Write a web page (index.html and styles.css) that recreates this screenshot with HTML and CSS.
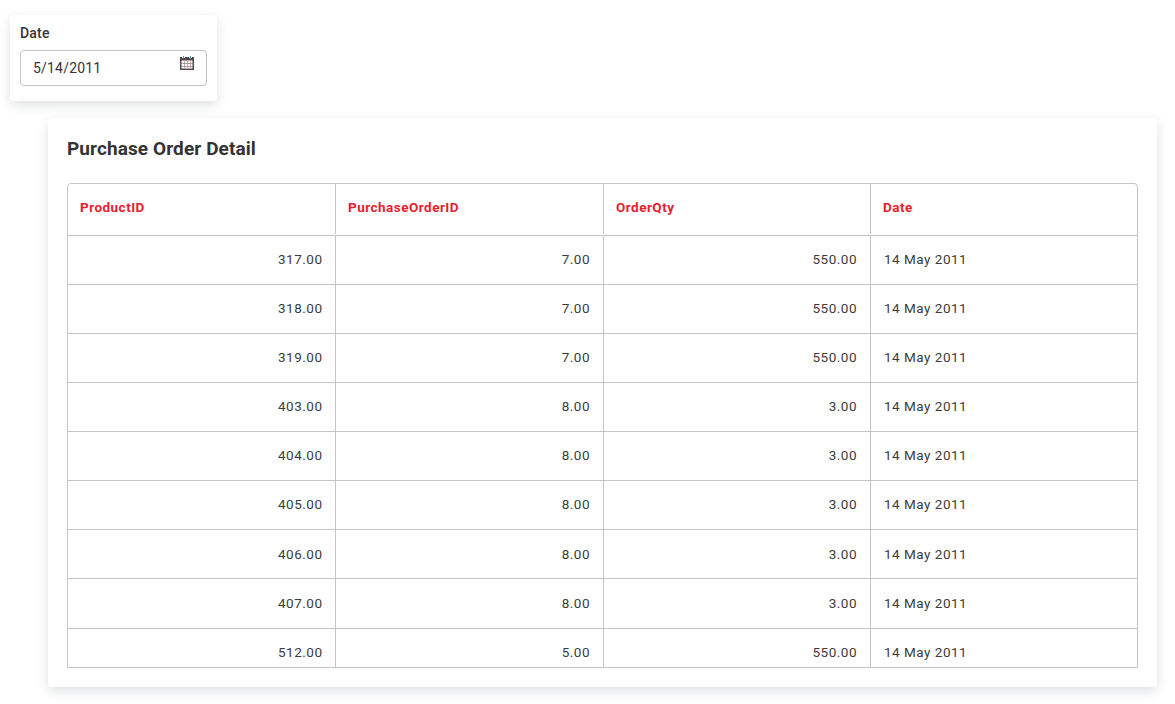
FILE: index.html
```html
<!DOCTYPE html>
<html lang="en">
<head>
<meta charset="utf-8">
<title>Purchase Order Detail</title>
<link rel="stylesheet" href="styles.css">
</head>
<body>
<section class="card filter">
  <label class="filter-label" for="date">Date</label>
  <div class="date-field" id="date">
    <span class="date-value">5/14/2011</span>
    <svg class="calendar" width="14" height="14" viewBox="0 0 14 14">
      <path fill="#55484a" d="M0 1h14v13H0z"/>
      <path fill="#fff" d="M1.500 4.500h11v8h-11z"/>
      <path fill="#d3aaa0" d="M4 4.500h1v8H4zM7 4.500h1v8H7zM10 4.500h1v8h-1z"/>
      <path fill="#7f7f86" fill-opacity=".7" d="M1 7h12v1H1zM1 10h12v1H1z"/>
      <path fill="#fff" d="M2 1h3v1H2zM9 1h3v1H9z"/>
      <path fill="#4b93b5" d="M3 0h1v3H3zM10 0h1v3h-1z"/>
    </svg>
  </div>
</section>
<section class="card report">
  <h1 class="title">Purchase Order Detail</h1>
  <div class="table-frame">
    <table class="orders">
      <thead><tr><th>ProductID</th><th>PurchaseOrderID</th><th>OrderQty</th><th>Date</th></tr></thead>
      <tbody>
        <tr><td>317.00</td><td>7.00</td><td>550.00</td><td>14 May 2011</td></tr>
        <tr><td>318.00</td><td>7.00</td><td>550.00</td><td>14 May 2011</td></tr>
        <tr><td>319.00</td><td>7.00</td><td>550.00</td><td>14 May 2011</td></tr>
        <tr><td>403.00</td><td>8.00</td><td>3.00</td><td>14 May 2011</td></tr>
        <tr><td>404.00</td><td>8.00</td><td>3.00</td><td>14 May 2011</td></tr>
        <tr><td>405.00</td><td>8.00</td><td>3.00</td><td>14 May 2011</td></tr>
        <tr><td>406.00</td><td>8.00</td><td>3.00</td><td>14 May 2011</td></tr>
        <tr><td>407.00</td><td>8.00</td><td>3.00</td><td>14 May 2011</td></tr>
        <tr><td>512.00</td><td>5.00</td><td>550.00</td><td>14 May 2011</td></tr>
      </tbody>
    </table>
  </div>
</section>
</body>
</html>
```
FILE: styles.css
```css
* { box-sizing: border-box; }
body {
  margin: 0;
  padding: 15px 18px 0 10px;
  height: 704px;
  overflow: hidden;
  background: #fff;
  color: #333;
  font-family: Roboto, sans-serif;
  font-size: 13.5px;
}
.card {
  background: #fff;
  border-radius: 4px;
  box-shadow: 0 4px 12px rgba(30, 45, 60, 0.14);
}
.filter { width: 207px; height: 86px; padding: 8px 10px; }
.filter-label {
  display: block;
  height: 27px;
  line-height: 20px;
  font-size: 14px;
  font-weight: 500;
  letter-spacing: 0.2px;
}
.date-field {
  display: flex;
  justify-content: space-between;
  height: 36px;
  padding: 0 12px;
  border: 1px solid #c4c4c4;
  border-radius: 4px;
}
.date-value { font-size: 14px; line-height: 34px; letter-spacing: 0.2px; }
.calendar { margin-top: 5px; }
.report {
  width: 1109px;
  height: 569px;
  margin: 17px 0 0 38px;
  padding: 19px;
}
.title {
  margin: 0;
  height: 46px;
  line-height: 24px;
  font-size: 19px;
  font-weight: 700;
  letter-spacing: 0.1px;
}
.table-frame {
  width: 1071px;
  height: 485px;
  overflow: hidden;
  border: 1px solid #c4c4c4;
  border-radius: 4px 4px 0 0;
}
.orders, .orders thead, .orders tbody { display: block; }
.orders tr {
  display: grid;
  grid-template-columns: 268px 268px 267px 266px;
  height: 49.07px;
  border-bottom: 1px solid #c4c4c4;
}
.orders thead tr { height: 52px; padding-bottom: 1px; }
.orders th, .orders td {
  padding: 0 13px 0 12px;
  border-right: 1px solid #c4c4c4;
}
.orders th:last-child, .orders td:last-child { border-right: 0; }
.orders th {
  line-height: 46px;
  font-weight: 700;
  color: #e81e2d;
  text-align: left;
  letter-spacing: 0.48px;
}
.orders td {
  padding-top: 0.18px;
  color: #3c3c3c;
  line-height: 46px;
  text-align: right;
  letter-spacing: 0.5px;
}
.orders td:first-child { padding-right: 12.5px; }
.orders td:last-child { text-align: left; padding-left: 13px; }
```
